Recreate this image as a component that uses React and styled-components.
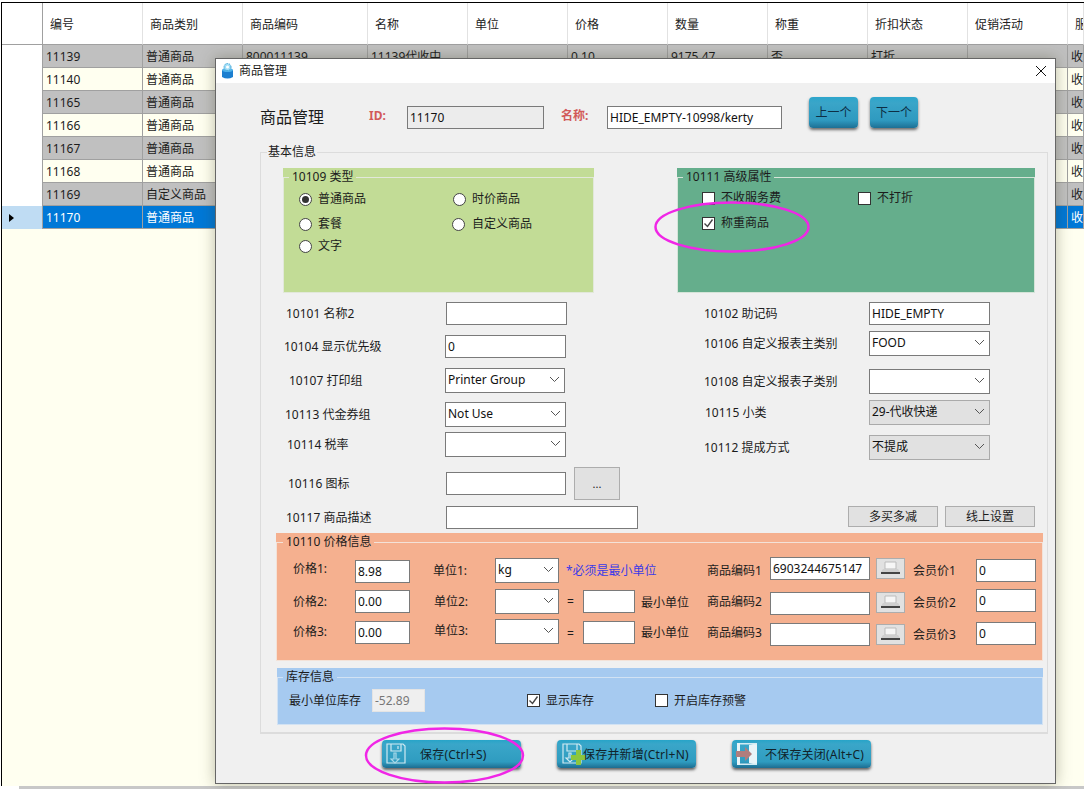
import React from 'react';
import styled, { createGlobalStyle } from 'styled-components';

const Global = createGlobalStyle`
  html, body { margin: 0; padding: 0; background: #fff; }
  * { box-sizing: border-box; }
  body { font: 12px/18px "Noto Sans", "Noto Sans CJK SC", sans-serif; color: #1c1c1c; }
`;

const Page = styled.div`
  position: relative; width: 1084px; height: 789px; overflow: hidden; background: #fff;
  display: flex; flex-direction: column; padding: 2px 0 0 1px;
`;
const Frame = styled.div`
  flex: 1; min-height: 0; background: #fffff0; border-left: 1px solid #000; border-top: 1px solid #000;
`;
const Scroll = styled.div`
  height: 3px; margin-left: 18px; background: #c8c8c8; flex: none;
`;
const Table = styled.div`
  display: grid;
  grid-template-columns: 41px 100px 100px 125px repeat(7, 100px) 16px;
  grid-template-rows: 42px repeat(8, 23px);
`;
const HeadCell = styled.div`
  background: #fff; border-right: 1px solid ${p => (p.$corner ? '#a0a0a0' : '#e2e2e2')}; border-bottom: 1px solid #a0a0a0;
  padding: 13px 0 0 7px; white-space: nowrap; overflow: hidden; color: #222;
`;
const RowHead = styled.div`
  background: ${p => (p.$sel ? '#bfdcf3' : '#fff')}; border-right: 1px solid #a0a0a0;
  display: flex; align-items: center; padding-left: 7px;
`;
const Cell = styled.div`
  background: ${p => (p.$sel ? '#0078d7' : p.$odd ? '#c0c0c0' : '#fffff0')};
  color: ${p => (p.$sel ? '#fff' : '#1c1c1c')};
  border-right: 1px solid #a0a0a0; border-bottom: 1px solid #a0a0a0;
  padding: 3px 0 0 3px; white-space: nowrap; overflow: hidden;
`;
const Arrow = styled.i`
  width: 0; height: 0; border-left: 5px solid #000; border-top: 4px solid transparent; border-bottom: 4px solid transparent;
`;

const Dialog = styled.div`
  position: absolute; left: 215px; top: 58px; width: 841px; height: 726px;
  background: #f0f0f0; border: 1px solid #666; box-shadow: 0 0 14px rgba(60, 60, 30, .35);
`;
const TitleBar = styled.div`
  height: 24px; background: #fff; display: flex; align-items: center; padding: 0 8px 1px 5px; gap: 5px;
`;
const TitleText = styled.span` flex: 1; `;
const Head = styled.div`
  display: flex; align-items: flex-end; height: 32px; margin-top: 14px; padding-left: 44px;
`;
const PageTitle = styled.div`
  width: 109px; font-size: 16px; line-height: 22px; margin-bottom: 1px;
`;
const RedLabel = styled.div`
  width: ${p => p.$w}px; margin-left: ${p => p.$ml || 0}px; color: #d25a5a; font-weight: 700; line-height: 18px; margin-bottom: 4px;
`;
const TextBox = styled.input`
  display: block; width: ${p => p.$w}px; height: ${p => p.$h || 23}px; margin: ${p => p.$top || 0}px 0 0 0;
  padding: 0 2px; border: 1px solid ${p => (p.$off ? '#e4e4e4' : '#7a7a7a')}; border-radius: 0; outline: none;
  background: ${p => (p.$bg || '#fff')}; color: ${p => (p.$off ? '#777' : '#111')};
  font: 12px "Noto Sans", "Noto Sans CJK SC", sans-serif;
`;
const NavButton = styled.div`
  width: ${p => p.$w}px; height: 31px; margin-left: ${p => p.$ml}px; margin-bottom: 1px; border-radius: 4px;
  display: flex; align-items: center; justify-content: center; color: #0d2f45;
  background: linear-gradient(#2ea6cc 0, #3aa5c8 20%, #2f9ac0 75%, #1d6f94 100%);
  box-shadow: 0 2px 3px rgba(0, 0, 0, .55);
`;
const Basic = styled.fieldset`
  margin: 14px 0 0 44px; padding: 0; width: 788px; height: 591px; border: 1px solid #dcdcdc; border-width: 1px 1px 2px 1px; min-inline-size: 0;
`;
const BasicLegend = styled.legend`
  margin-left: 6px; padding: 0 1px; line-height: 18px; height: 18px;
`;
const TopPanels = styled.div`
  display: flex; gap: 83px; margin: 7px 0 0 22px;
`;
const PanelBox = styled.div`
  margin: ${p => p.$mt || 0}px 0 0 ${p => p.$ml || 0}px;
  width: ${p => p.$w}px; height: ${p => p.$h}px; background: ${p => p.$bg};
`;
const PanelField = styled.fieldset`
  margin: 0; padding: 0; min-inline-size: 0; height: 100%;
  border: 1px solid ${p => p.$line};
`;
const PanelLegend = styled.legend`
  margin-left: ${p => p.$lx}px; padding: 0 3px; height: 18px; line-height: 18px; white-space: nowrap;
`;
const Options = styled.div`
  display: grid; grid-template-columns: ${p => p.$col}px 1fr; grid-template-rows: ${p => p.$rows};
  padding: ${p => p.$pad};
`;
const Option = styled.label`
  display: flex; align-items: center; height: 18px; gap: ${p => p.$gap || 6}px; margin-left: ${p => p.$ml || 0}px; white-space: nowrap;
`;
const Radio = styled.span`
  width: 13px; height: 13px; border-radius: 50%; background: #fff; border: 1px solid #444;
  display: flex; align-items: center; justify-content: center; flex: none;
  &::after { content: ''; width: 7px; height: 7px; border-radius: 50%; background: ${p => (p.$on ? '#333' : 'transparent')}; }
`;
const Check = styled.span`
  width: 13px; height: 13px; background: #fff; border: 1px solid #333; flex: none; display: flex; align-items: center; justify-content: center;
`;
const FormCols = styled.div`
  display: grid; grid-template-columns: 443px 1fr; height: 240px;
`;
const FormCol = styled.div` display: flex; flex-direction: column; `;
const FormRow = styled.div`
  display: grid; grid-template-columns: ${p => p.$at}px auto; align-items: center; justify-content: start;
  margin-top: ${p => p.$mt}px;
`;
const FieldLabel = styled.div`
  padding-left: ${p => p.$x || 0}px; white-space: nowrap;
`;
const InlineGroup = styled.div` display: flex; align-items: center; gap: 8px; `;
const SelectBox = styled.div`
  width: ${p => p.$w}px; height: 25px; margin-top: ${p => p.$top || 0}px;
  border: 1px solid ${p => (p.$off ? '#aaa' : '#7a7a7a')}; background: ${p => (p.$off ? '#e1e1e1' : '#fff')};
  display: flex; align-items: center; justify-content: space-between; padding: 0 4px 2px 2px; color: #111;
`;
const SquareButton = styled.div`
  width: 46px; height: 33px; background: #e1e1e1; border: 1px solid #adadad; display: flex; align-items: center; justify-content: center; font-size: 11px;
`;
const SmallBtns = styled.div`
  display: flex; gap: 7px; margin: 46px 0 0 144px;
`;
const SmallBtn = styled.div`
  width: 90px; height: 21px; background: #e1e1e1; border: 1px solid #adadad; display: flex; align-items: center; justify-content: center;
`;
const PriceGrid = styled.div`
  display: grid; padding: 4px 0 0 16px;
  grid-template-columns: 62px 55px 85px 64px 24px 52px 72px 63px 100px 35px 71px 60px;
  grid-template-rows: repeat(3, 31px);
`;
const PriceLabel = styled.div`
  margin-top: ${p => p.$top}px; padding-left: ${p => p.$x || 0}px; white-space: nowrap; height: 18px;
`;
const Hint = styled.div`
  grid-column: 5 / span 3; margin-top: 7px; padding-left: 7px; color: #3a3ae8; white-space: nowrap; height: 18px;
`;
const PrintCell = styled.div` padding-left: 6px; `;
const PrintBtn = styled.div`
  width: 29px; height: 21px; margin-top: ${p => p.$top}px; background: #e1e1e1; border: 1px solid #adadad;
  display: flex; align-items: center; justify-content: center;
`;
const StockRow = styled.div`
  display: flex; align-items: center; height: 23px; margin-top: 3px; padding-left: 11px;
`;
const StockLabel = styled.div` width: 83px; white-space: nowrap; `;
const StockCheck = styled(Option)` margin-left: ${p => p.$ml}px; `;
const Footer = styled.div`
  display: flex; gap: 36px; margin-top: 6px; padding-left: 166px;
`;
const BigButton = styled.div`
  width: 139px; height: 28px; border-radius: 4px; display: flex; align-items: center; color: #10232b;
  padding-left: 4px; white-space: nowrap;
  background: linear-gradient(#27a4c8 0, #3aa6c9 15%, #2f9cc0 78%, #1d6c90 100%);
  box-shadow: 0 2px 3px rgba(0, 0, 0, .6);
`;
const BigLabel = styled.span` margin: 2px 0 0 ${p => p.$ml}px; letter-spacing: .2px; `;
const Marks = styled.svg`
  position: absolute; left: 0; top: 0; width: 1084px; height: 789px; pointer-events: none;
`;

const Chevron = () => (
  <svg width="11" height="7" viewBox="0 0 11 7"><path d="M1 1l4.5 4.5L10 1" fill="none" stroke="#555" strokeWidth="1" /></svg>
);
const Tick = () => (
  <svg width="11" height="11" viewBox="0 0 11 11"><path d="M1.5 5.5l3 3 5-7" fill="none" stroke="#444" strokeWidth="1.4" /></svg>
);
const Select = ({ v, ...r }) => <SelectBox {...r}><span>{v}</span><Chevron /></SelectBox>;
const Printer = () => (
  <svg width="21" height="15" viewBox="0 0 21 15">
    <path d="M5 1h11v7H5z" fill="#f6f6f6" stroke="#bbb" />
    <path d="M3 8h15l2 3H1z" fill="#cfcfcf" />
    <path d="M1 11h19v2H1z" fill="#444" />
  </svg>
);
const Floppy = () => (
  <svg width="20" height="22" viewBox="0 0 20 22" fill="none" stroke="#cfe9f2" strokeWidth="1.2">
    <path d="M1 1h16l2 2v17H1z" />
    <path d="M5 1v7h10V1M12 3v3" />
    <path d="M8 10v6H5l4 4 4-4h-3v-6z" stroke="#a9dae9" />
  </svg>
);
const FloppyPlus = () => (
  <svg width="30" height="24" viewBox="0 0 30 24">
    <g fill="none" stroke="#cfe9f2" strokeWidth="1.2">
      <path d="M2 2h16l2 2v17H2z" /><path d="M6 2v7h10V2" /><path d="M8 11v5H5l4 4 4-4h-3v-5z" />
    </g>
    <path d="M15 7h5v5h5v5h-5v5h-5v-5h-5v-5h5z" transform="translate(0 1)" fill="#8cc63f" />
  </svg>
);
const DoorOut = () => (
  <svg width="22" height="24" viewBox="0 0 22 24">
    <path d="M1 1h3v22H1z" fill="#e8f4f8" />
    <path d="M13 3l8-2v22l-8-2z" fill="#e8f4f8" />
    <path d="M4 1h17v1.500H4zM4 21.500h17V23H4z" fill="#d2ebf3" />
    <path d="M0 9h9V5l7 7-7 7v-4H0z" fill="#b07d7d" />
  </svg>
);
const AppIcon = () => (
  <svg width="13" height="16" viewBox="0 0 13 16">
    <path d="M1 7h11v7q-5.500 3-11 0z" fill="#1c7fd0" />
    <ellipse cx="6.500" cy="7" rx="5.500" ry="2" fill="#4fb2ea" />
    <circle cx="6.500" cy="4" r="3.500" fill="#9fdcf5" stroke="#3fa6d8" strokeDasharray="1.500 1" />
    <circle cx="6.500" cy="4" r="1.500" fill="#fff" />
  </svg>
);

const Panel = ({ mt, ml, w, h, bg, line = '#e2e8da', lx = 6, legend, children }) => (
  <PanelBox $mt={mt} $ml={ml} $w={w} $h={h} $bg={bg}>
    <PanelField $line={line}>
      <PanelLegend $lx={lx}>{legend}</PanelLegend>
      {children}
    </PanelField>
  </PanelBox>
);

const heads = ['编号', '商品类别', '商品编码', '名称', '单位', '价格', '数量', '称重', '折扣状态', '促销活动', '服'];
const rows = [
  ['11139', '普通商品', '800011139', '11139代收中', '', '0.10', '9175.47', '否', '打折', '', '收'],
  ['11140', '普通商品'], ['11165', '普通商品'], ['11166', '普通商品'], ['11167', '普通商品'],
  ['11168', '普通商品'], ['11169', '自定义商品'], ['11170', '普通商品'],
];
const leftFields = [
  { mt: 9, at: 185, x: 25, label: '10101 名称2', c: <TextBox $w={121} readOnly /> },
  { mt: 10, at: 184, x: 23, label: '10104 显示优先级', c: <TextBox $w={121} readOnly defaultValue="0" /> },
  { mt: 10, at: 184, x: 28, label: '10107 打印组', c: <Select $w={120} v="Printer Group" /> },
  { mt: 9, at: 184, x: 24, label: '10113 代金券组', c: <Select $w={121} v="Not Use" /> },
  { mt: 5, at: 184, x: 26, label: '10114 税率', c: <Select $w={121} v="" /> },
];
const rightFields = [
  { mt: 9, label: '10102 助记码', c: <TextBox $w={121} readOnly defaultValue="HIDE_EMPTY" /> },
  { mt: 6, label: '10106 自定义报表主类别', c: <Select $w={121} v="FOOD" /> },
  { mt: 13, label: '10108 自定义报表子类别', c: <Select $w={121} v="" /> },
  { mt: 6, label: '10115 小类', x: 1, c: <Select $off $w={121} v="29-代收快递" /> },
  { mt: 10, label: '10112 提成方式', c: <Select $off $w={121} v="不提成" /> },
];

export default function App() {
  return (
    <Page>
      <Global />
      <Frame>
        <Table>
          <HeadCell $corner />
          {heads.map(h => <HeadCell key={h}>{h}</HeadCell>)}
          {rows.map((r, i) => (
            <React.Fragment key={r[0]}>
              <RowHead $sel={i === 7}>{i === 7 && <Arrow />}</RowHead>
              {heads.map((h, j) => (
                <Cell key={h} $odd={i % 2 === 0} $sel={i === 7}>{j === 10 ? '收' : r[j] || ''}</Cell>
              ))}
            </React.Fragment>
          ))}
        </Table>
      </Frame>
      <Scroll />

      <Dialog>
        <TitleBar>
          <AppIcon />
          <TitleText>商品管理</TitleText>
          <svg width="12" height="12" viewBox="0 0 12 12"><path d="M1 1l10 10M11 1L1 11" stroke="#111" strokeWidth="1" /></svg>
        </TitleBar>
        <Head>
          <PageTitle>商品管理</PageTitle>
          <RedLabel $w={38}>ID:</RedLabel>
          <TextBox $w={137} $bg="#ececec" readOnly defaultValue="11170" />
          <RedLabel $w={46} $ml={17}>名称:</RedLabel>
          <TextBox $w={175} readOnly defaultValue="HIDE_EMPTY-10998/kerty" />
          <NavButton $w={49} $ml={27}>上一个</NavButton>
          <NavButton $w={48} $ml={12}>下一个</NavButton>
        </Head>
        <Basic>
          <BasicLegend>基本信息</BasicLegend>
          <TopPanels>
            <Panel w={311} h={125} bg="#c2dc96" lx={5} legend="10109 类型">
              <Options $col={154} $rows="25px 22px 18px" $pad="4px 0 0 15px">
                <Option><Radio $on />普通商品</Option>
                <Option><Radio />时价商品</Option>
                <Option><Radio />套餐</Option>
                <Option $ml={-1} $gap={7}><Radio />自定义商品</Option>
                <Option><Radio />文字</Option>
              </Options>
            </Panel>
            <Panel w={358} h={125} bg="#65ae8c" lx={5} line="#d5e4d8" legend="10111 高级属性">
              <Options $col={156} $rows="25px 18px" $pad="3px 0 0 24px">
                <Option><Check />不收服务费</Option>
                <Option><Check />不打折</Option>
                <Option><Check><Tick /></Check>称重商品</Option>
              </Options>
            </Panel>
          </TopPanels>
          <FormCols>
            <FormCol>
              {leftFields.map(f => (
                <FormRow key={f.label} $mt={f.mt} $at={f.at}>
                  <FieldLabel $x={f.x}>{f.label}</FieldLabel>{f.c}
                </FormRow>
              ))}
              <FormRow $mt={10} $at={185}>
                <FieldLabel $x={27}>10116 图标</FieldLabel>
                <InlineGroup><TextBox $w={120} readOnly /><SquareButton>...</SquareButton></InlineGroup>
              </FormRow>
              <FormRow $mt={6} $at={185}>
                <FieldLabel $x={25}>10117 商品描述</FieldLabel>
                <TextBox $w={192} readOnly />
              </FormRow>
            </FormCol>
            <FormCol>
              {rightFields.map(f => (
                <FormRow key={f.label} $mt={f.mt} $at={165}>
                  <FieldLabel $x={f.x}>{f.label}</FieldLabel>{f.c}
                </FormRow>
              ))}
              <SmallBtns>
                <SmallBtn>多买多减</SmallBtn>
                <SmallBtn>线上设置</SmallBtn>
              </SmallBtns>
            </FormCol>
          </FormCols>
          <Panel ml={15} w={767} h={128} bg="#f5b08f" line="#f3e2d8" legend="10110 价格信息">
            <PriceGrid>
              <PriceLabel $top={5}>价格1:</PriceLabel>
              <TextBox $w={55} $top={5} readOnly defaultValue="8.98" />
              <PriceLabel $top={7} $x={23}>单位1:</PriceLabel>
              <Select $w={64} $top={3} v="kg" />
              <Hint>*必须是最小单位</Hint>
              <PriceLabel $top={7}>商品编码1</PriceLabel>
              <TextBox $w={100} $top={2} readOnly defaultValue="6903244675147" />
              <PrintCell><PrintBtn $top={3}><Printer /></PrintBtn></PrintCell>
              <PriceLabel $top={7} $x={8}>会员价1</PriceLabel>
              <TextBox $w={60} $top={4} readOnly defaultValue="0" />

              <PriceLabel $top={7}>价格2:</PriceLabel>
              <TextBox $w={55} $top={4} readOnly defaultValue="0.00" />
              <PriceLabel $top={7} $x={24}>单位2:</PriceLabel>
              <Select $w={64} $top={3} v="" />
              <PriceLabel $top={7} $x={8}>=</PriceLabel>
              <TextBox $w={52} $top={4} readOnly />
              <PriceLabel $top={8} $x={6}>最小单位</PriceLabel>
              <PriceLabel $top={7}>商品编码2</PriceLabel>
              <TextBox $w={100} $top={6} readOnly />
              <PrintCell><PrintBtn $top={6}><Printer /></PrintBtn></PrintCell>
              <PriceLabel $top={8} $x={8}>会员价2</PriceLabel>
              <TextBox $w={60} $top={3} readOnly defaultValue="0" />

              <PriceLabel $top={6}>价格3:</PriceLabel>
              <TextBox $w={55} $top={4} readOnly defaultValue="0.00" />
              <PriceLabel $top={5} $x={24}>单位3:</PriceLabel>
              <Select $w={64} $top={2} v="" />
              <PriceLabel $top={8} $x={8}>=</PriceLabel>
              <TextBox $w={52} $top={4} readOnly />
              <PriceLabel $top={7} $x={6}>最小单位</PriceLabel>
              <PriceLabel $top={7}>商品编码3</PriceLabel>
              <TextBox $w={100} $top={6} readOnly />
              <PrintCell><PrintBtn $top={7}><Printer /></PrintBtn></PrintCell>
              <PriceLabel $top={9} $x={8}>会员价3</PriceLabel>
              <TextBox $w={60} $top={5} readOnly defaultValue="0" />
            </PriceGrid>
          </Panel>
          <Panel mt={7} ml={16} w={766} h={57} bg="#a6caf0" line="#d2e2f3" lx={5} legend="库存信息">
            <StockRow>
              <StockLabel>最小单位库存</StockLabel>
              <TextBox $off $w={53} $bg="#efefef" readOnly defaultValue="-52.89" />
              <StockCheck $ml={102}><Check><Tick /></Check>显示库存</StockCheck>
              <StockCheck $ml={61}><Check />开启库存预警</StockCheck>
            </StockRow>
          </Panel>
        </Basic>
        <Footer>
          <BigButton><Floppy /><BigLabel $ml={14}>保存(Ctrl+S)</BigLabel></BigButton>
          <BigButton><FloppyPlus /><BigLabel $ml={-8}>保存并新增(Ctrl+N)</BigLabel></BigButton>
          <BigButton><DoorOut /><BigLabel $ml={7}>不保存关闭(Alt+C)</BigLabel></BigButton>
        </Footer>
      </Dialog>

      <Marks viewBox="0 0 1084 789">
        <ellipse cx="732" cy="227" rx="76.500" ry="24.500" fill="none" stroke="#f026e6" strokeWidth="2.500" />
        <ellipse cx="444.500" cy="755.500" rx="78.500" ry="27" fill="none" stroke="#f026e6" strokeWidth="2.500" />
      </Marks>
    </Page>
  );
}
